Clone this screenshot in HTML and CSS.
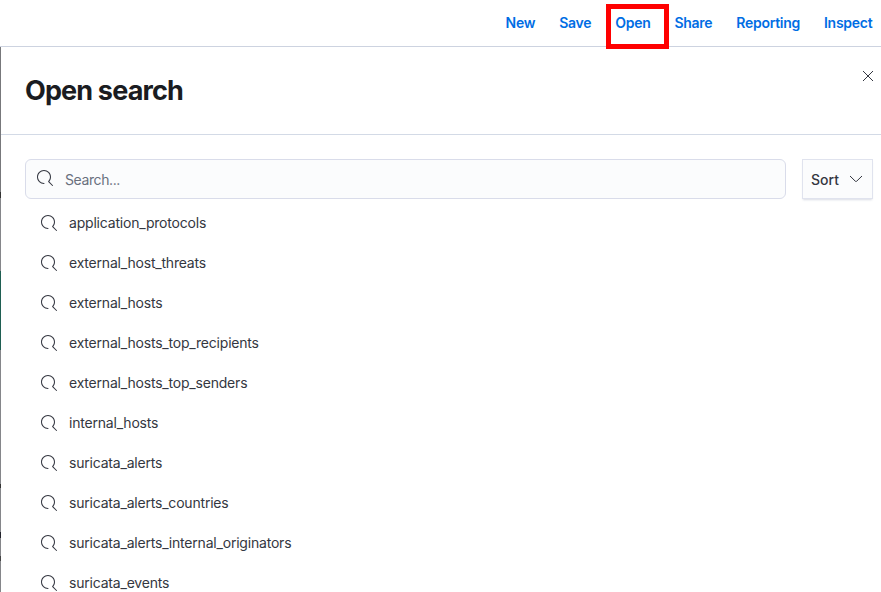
FILE: index.html
```
<!DOCTYPE html>
<html lang="en">
<head>
<meta charset="utf-8">
<title>Open search</title>
<link rel="stylesheet" href="styles.css">
</head>
<body>
<svg class="defs" aria-hidden="true">
  <symbol id="search" viewBox="0 0 16 16"><path d="M11.271 11.978l3.872 3.873a.502.502 0 00.708 0 .502.502 0 000-.708l-3.565-3.564c2.38-2.747 2.267-6.923-.342-9.532-2.73-2.73-7.17-2.73-9.898 0-2.728 2.729-2.728 7.17 0 9.9a6.955 6.955 0 004.949 2.05.5.5 0 000-1 5.96 5.96 0 01-4.242-1.757 6.01 6.01 0 010-8.486 6.004 6.004 0 018.484 0 6.01 6.01 0 010 8.486.5.5 0 00.034.738z"/></symbol>
</svg>
<nav class="topbar">
  <a>New</a><a>Save</a><a>Open</a><a>Share</a><a>Reporting</a><a>Inspect</a>
  <span class="highlight"></span>
</nav>
<div class="body">
  <div class="backdrop"></div>
  <section class="flyout">
    <header class="head">
      <h2>Open search</h2>
      <svg class="close" viewBox="0 0 12 12"><path d="M1 1l10 10M11 1L1 11"/></svg>
    </header>
    <div class="controls">
      <div class="field"><svg class="icon"><use href="#search"/></svg><span>Search...</span></div>
      <button class="sort"><span>Sort</span><svg viewBox="0 0 14 8"><path d="M1 1l5.3 5.2q.7.6 1.4 0L13 1"/></svg></button>
    </div>
    <ul class="list">
      <li><svg class="icon"><use href="#search"/></svg><span>application_protocols</span></li>
      <li><svg class="icon"><use href="#search"/></svg><span>external_host_threats</span></li>
      <li><svg class="icon"><use href="#search"/></svg><span>external_hosts</span></li>
      <li><svg class="icon"><use href="#search"/></svg><span>external_hosts_top_recipients</span></li>
      <li><svg class="icon"><use href="#search"/></svg><span>external_hosts_top_senders</span></li>
      <li><svg class="icon"><use href="#search"/></svg><span>internal_hosts</span></li>
      <li><svg class="icon"><use href="#search"/></svg><span>suricata_alerts</span></li>
      <li><svg class="icon"><use href="#search"/></svg><span>suricata_alerts_countries</span></li>
      <li><svg class="icon"><use href="#search"/></svg><span>suricata_alerts_internal_originators</span></li>
      <li><svg class="icon"><use href="#search"/></svg><span>suricata_events</span></li>
    </ul>
  </section>
</div>
</body>
</html>
```
FILE: styles.css
```
* { box-sizing: border-box; }
body {
  margin: 0;
  height: 592px;
  overflow: hidden;
  background: #fff;
  color: #343741;
  font: 400 14px/20px Inter, "Liberation Sans", sans-serif;
  display: flex;
  flex-direction: column;
}
.defs { position: absolute; width: 0; height: 0; }
.topbar {
  position: relative;
  flex: none;
  height: 47px;
  padding: 13px 8.7px 0 0;
  border-bottom: 1px solid #cdd3e0;
  display: flex;
  justify-content: flex-end;
  gap: 24px;
  color: #006de4;
  font-weight: 600;
  letter-spacing: -0.28px;
}
.highlight {
  position: absolute;
  left: 606px;
  top: 4px;
  width: 63px;
  height: 45px;
  border: 5px solid #f00;
}
.body { flex: 1; display: flex; min-height: 0; }
.backdrop {
  width: 1px;
  background: linear-gradient(#77787b 0 145px, #333 145px 151px, #85868a 151px 224px, #1f5f52 224px 303px, #85868a 303px 437px, #333 437px 441px, #85868a 441px 485px, #22232b 485px 491px, #85868a 491px 509px, #444 509px 514px, #85868a 514px);
}
.flyout { flex: 1; }
.head {
  height: 88px;
  padding: 0 8px 0 24px;
  border-bottom: 1px solid #d3dae6;
  display: flex;
  justify-content: space-between;
}
h2 {
  margin: 27px 0 0;
  color: #1a1c21;
  font-size: 27px;
  line-height: 34px;
  font-weight: 700;
  letter-spacing: -0.85px;
}
.close {
  width: 12px;
  height: 12px;
  margin-top: 23px;
  margin-right: -1px;
  fill: none;
  stroke: #343741;
}
.controls {
  display: flex;
  gap: 16px;
  padding: 24px 8px 0 24px;
}
.field {
  flex: 1;
  height: 40px;
  display: flex;
  align-items: center;
  padding: 1px 11px 0;
  gap: 12px;
  border: 1px solid #d9dcea;
  border-radius: 6px;
  background: #fbfcfd;
  color: #69707d;
  letter-spacing: -0.4px;
}
.icon { width: 16px; height: 16px; fill: #343741; flex: none; }
.field .icon { margin-top: -4px; }
.sort {
  width: 71px;
  height: 40px;
  padding: 1px 9px 0 8px;
  border: 1px solid #e0e3ee;
  background: #fbfcfd;
  box-shadow: 0 2px 2px -1px rgba(130, 135, 165, .3);
  display: flex;
  align-items: center;
  justify-content: space-between;
  font: 500 14px/20px Inter, sans-serif;
  color: #343741;
}
.sort svg { width: 14px; height: 8px; fill: none; stroke: #343741; margin-top: -2px; }
.list { list-style: none; margin: 4px 0 0; padding: 0; }
.list li {
  height: 40px;
  display: flex;
  align-items: center;
  padding-left: 40px;
  gap: 12px;
  letter-spacing: -0.2px;
}
```
